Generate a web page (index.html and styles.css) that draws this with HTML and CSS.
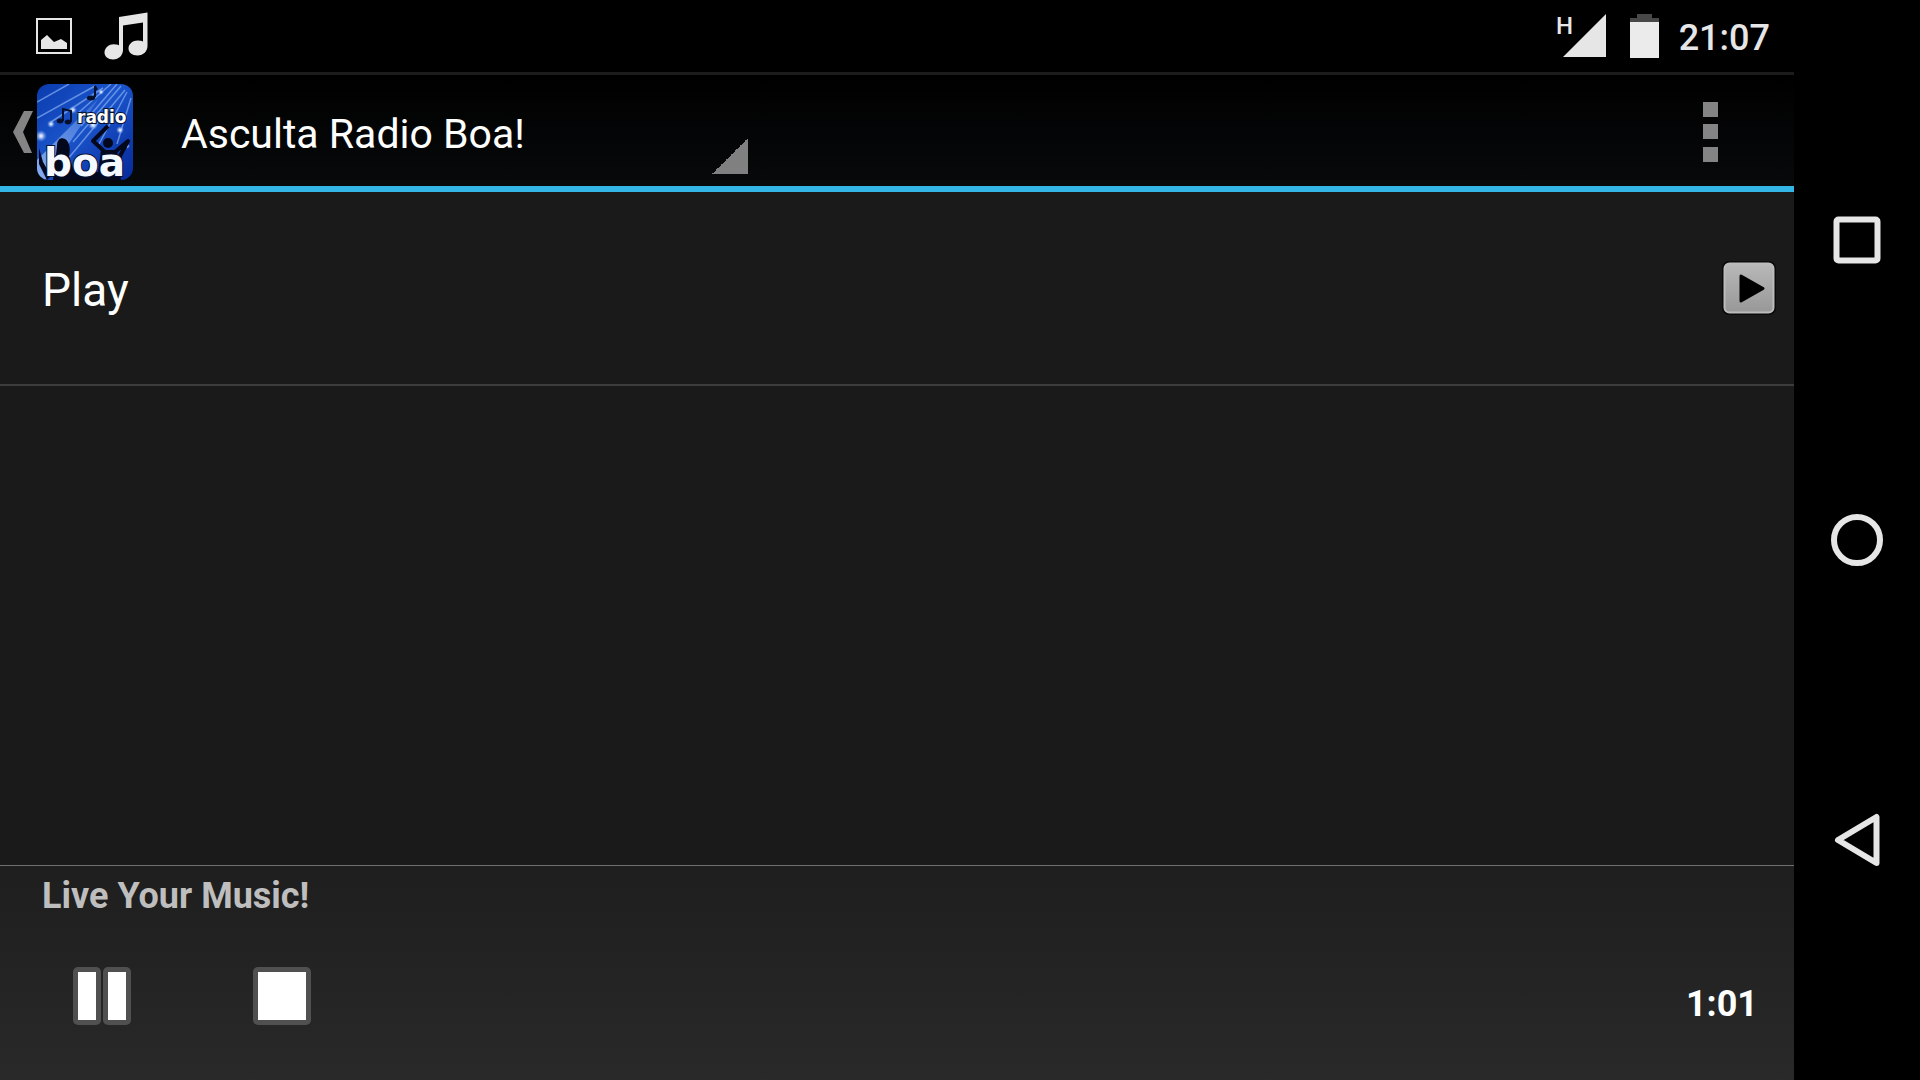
FILE: index.html
```html
<!DOCTYPE html>
<html lang="ro">
<head>
  <meta charset="UTF-8">
  <meta name="viewport" content="width=device-width, initial-scale=1.0">
  <title>Radio Boa</title>
  <link rel="stylesheet" href="styles.css">
</head>
<body>
  <div class="screen">
    <div class="status-bar">
      <div class="notifications">
        <svg width="36" height="36" viewBox="0 0 36 36">
          <rect x="1" y="1" width="34" height="34" fill="none" stroke="#e6e6e6" stroke-width="2"/>
          <path d="M5 31V22L11 17L18 24L25 21L31 25V31Z" fill="#e6e6e6"/>
        </svg>
        <svg width="44" height="48" viewBox="0 0 44 48">
          <path d="M15 5L43.500 0.500V34C43.500 39 39.500 43.500 33.500 43.500C28 43.500 24.500 40.500 24.500 36.500C24.500 31.500 29.500 28 34.500 28.500C36.500 28.600 38 29 39 29.500V10.500L19 13.500V38C19 43 15 47.500 9 47.500C4 47.500 0.500 44.500 0.500 40.500C0.500 35.500 5.500 32 10 32.200C12.500 32.300 14 32.700 15 33.200Z" fill="#e6e6e6"/>
        </svg>
      </div>
      <div class="system">
        <svg width="52" height="44" viewBox="0 0 52 44">
          <text x="2" y="20" class="network">H</text>
          <path d="M9 43L52 0V43Z" fill="#e6e6e6"/>
        </svg>
        <svg width="29" height="44" viewBox="0 0 29 44">
          <path d="M7 0H22V4H29V9H0V4H7Z" fill="#484848"/>
          <rect y="8" width="29" height="36" fill="#ebebeb"/>
        </svg>
        <span class="clock">21:07</span>
      </div>
    </div>

    <header class="action-bar">
      <button class="up-btn" aria-label="Back">
        <svg width="20" height="42" viewBox="0 0 20 42">
          <path d="M11 0H20L10 21L19 42H11L0 21Z" fill="#848484"/>
        </svg>
        <svg class="logo" width="96" height="96" viewBox="0 0 96 96">
          <defs>
            <linearGradient id="sky" x1="0" y1="0" x2="1" y2="1">
              <stop offset="0" stop-color="#0b3cae"/>
              <stop offset="0.450" stop-color="#1c55cc"/>
              <stop offset="1" stop-color="#062a9a"/>
            </linearGradient>
            <linearGradient id="beam" x1="1" y1="0" x2="0" y2="1">
              <stop offset="0" stop-color="#9cc0f8" stop-opacity="0.200"/>
              <stop offset="1" stop-color="#a9ccff" stop-opacity="0.750"/>
            </linearGradient>
            <radialGradient id="glow">
              <stop offset="0" stop-color="#ffffff"/>
              <stop offset="0.300" stop-color="#dbe9ff" stop-opacity="0.800"/>
              <stop offset="1" stop-color="#6fa0f0" stop-opacity="0"/>
            </radialGradient>
            <clipPath id="tile"><rect width="96" height="96" rx="12"/></clipPath>
          </defs>
          <g clip-path="url(#tile)">
            <rect width="96" height="96" fill="url(#sky)"/>
            <path d="M62 14L0 76V96H8Z" fill="url(#beam)"/>
            <g stroke="#86aef0" stroke-width="1.500" opacity="0.700">
              <path d="M0 18L32 0"/>
              <path d="M0 34L58 2"/>
              <path d="M14 38L66 4"/>
              <path d="M40 30L74 0"/>
              <path d="M44 42L80 0"/>
              <path d="M36 58L84 2"/>
              <path d="M30 76L88 6"/>
              <path d="M62 60L90 8"/>
              <path d="M80 60L94 14"/>
            </g>
            <circle cx="4" cy="52" r="6" fill="url(#glow)"/>
            <circle cx="14" cy="40" r="4" fill="url(#glow)"/>
            <circle cx="36" cy="26" r="4" fill="url(#glow)"/>
            <circle cx="56" cy="41" r="5" fill="url(#glow)"/>
            <circle cx="64" cy="8" r="3" fill="url(#glow)"/>
            <circle cx="83" cy="46" r="4" fill="url(#glow)"/>
            <circle cx="90" cy="62" r="3" fill="url(#glow)"/>
            <g fill="#04102e" stroke="#04102e">
              <path d="M58 13V2L60 6" fill="none" stroke-width="2"/>
              <ellipse cx="54" cy="14" rx="4" ry="2"/>
              <path d="M26 37V25L34 27V38" fill="none" stroke-width="2"/>
              <ellipse cx="23" cy="37" rx="3" ry="2"/>
              <ellipse cx="31" cy="38" rx="3" ry="2"/>
            </g>
            <!-- dancers behind the name -->
            <g fill="#03081c">
              <path d="M20 62C20 55 24 53 28 55C32 57 34 64 32 72L40 96H16Z"/>
              <path d="M2 64L6 78L14 92L10 96L2 80Z"/>
              <circle cx="71" cy="59" r="5"/>
              <path d="M34 88H76V96H34Z"/>
            </g>
            <path d="M71 42L56 57L68 68H78L91 57L82 74" fill="none" stroke="#03081c" stroke-width="4" stroke-linejoin="round"/>
            <path d="M64 66H80L84 96H60Z" fill="#03081c"/>
          </g>
          <text x="40" y="39" class="logo-small">radio</text>
          <text x="7" y="92" class="logo-big">boa</text>
        </svg>
      </button>
      <select class="title" aria-label="Section">
        <option>Asculta Radio Boa!</option>
      </select>
      <button class="more-btn" aria-label="More options">
        <svg width="15" height="60" viewBox="0 0 15 60">
          <path d="M0 0H15V15H0ZM0 22H15V37H0ZM0 45H15V60H0Z" fill="#848484"/>
        </svg>
      </button>
    </header>

    <main class="content">
      <button class="row">
        <span class="row-label">Play</span>
        <svg width="57" height="57" viewBox="0 0 57 57">
          <defs>
            <linearGradient id="key" x1="0" y1="0" x2="0" y2="1">
              <stop offset="0" stop-color="#b8b8b8"/>
              <stop offset="1" stop-color="#989898"/>
            </linearGradient>
          </defs>
          <rect x="2" y="1" width="54" height="54" rx="7" fill="#0a0a0a"/>
          <rect x="4.500" y="3.500" width="49" height="49" rx="5" fill="url(#key)" stroke="#bcbcbc" stroke-width="2"/>
          <path d="M21 16V41L43 28.500Z" fill="#000" stroke="#000" stroke-width="3" stroke-linejoin="round"/>
        </svg>
      </button>
    </main>

    <footer class="player">
      <div class="track">Live Your Music!</div>
      <div class="controls">
        <button class="control-btn" aria-label="Pause">
          <svg width="58" height="58" viewBox="0 0 58 58">
            <g fill="#505050">
              <rect width="28" height="58" rx="5"/>
              <rect x="30" width="28" height="58" rx="5"/>
            </g>
            <path d="M5 5H23V53H5ZM35 5H53V53H35Z" fill="#fff"/>
          </svg>
        </button>
        <button class="control-btn" aria-label="Stop">
          <svg width="58" height="58" viewBox="0 0 58 58">
            <rect width="58" height="58" rx="5" fill="#505050"/>
            <rect x="5" y="5" width="48" height="48" fill="#fff"/>
          </svg>
        </button>
        <span class="time">1:01</span>
      </div>
    </footer>
  </div>

  <nav class="nav-bar">
    <button class="nav-btn" aria-label="Recent apps">
      <svg width="54" height="54" viewBox="0 0 54 54">
        <rect x="6.500" y="6.500" width="41" height="41" rx="2" fill="none" stroke="#e6e6e6" stroke-width="6"/>
      </svg>
    </button>
    <button class="nav-btn" aria-label="Home">
      <svg width="54" height="54" viewBox="0 0 54 54">
        <circle cx="27" cy="27" r="23" fill="none" stroke="#e6e6e6" stroke-width="6"/>
      </svg>
    </button>
    <button class="nav-btn" aria-label="Back">
      <svg width="54" height="54" viewBox="0 0 54 54">
        <path d="M46.500 4V50L8 27Z" fill="none" stroke="#e6e6e6" stroke-width="6" stroke-linejoin="round"/>
      </svg>
    </button>
  </nav>
</body>
</html>
```
FILE: styles.css
```css
* {
  box-sizing: border-box;
}
body {
  margin: 0;
  height: 100vh;
  display: flex;
  background: #000;
  color: #fff;
  font-family: Roboto, sans-serif;
}
button {
  border: none;
  background: none;
  padding: 0;
  color: inherit;
  font-family: inherit;
  cursor: pointer;
}
svg {
  display: block;
  flex-shrink: 0;
  overflow: visible;
}
.screen {
  flex: 1;
  display: flex;
  flex-direction: column;
  background: #1a1a1a;
}

/* status bar */
.status-bar {
  height: 72px;
  padding: 0 24px 0 36px;
  display: flex;
  justify-content: space-between;
  align-items: center;
  background: #000;
}
.notifications {
  display: flex;
  align-items: center;
  gap: 32px;
}
.system {
  display: flex;
  align-items: center;
  gap: 24px;
}
.network {
  font-size: 24px;
  font-weight: 500;
  fill: #e6e6e6;
}
.clock {
  margin-left: -4px;
  padding-top: 4px;
  font-size: 36px;
  font-weight: 500;
  line-height: 40px;
  color: #e6e6e6;
}

/* action bar */
.action-bar {
  height: 120px;
  padding-top: 2px;
  display: flex;
  align-items: center;
  background: linear-gradient(#000, #07090a);
  border-top: 3px solid #1c1c1c;
  border-bottom: 6px solid #33b5e5;
}
.up-btn {
  padding-left: 13px;
  display: flex;
  align-items: center;
  gap: 4px;
}
.title {
  width: 588px;
  height: 96px;
  margin-left: 27px;
  padding: 4px 48px 0 21px;
  appearance: none;
  border: none;
  color: #fff;
  font-family: inherit;
  font-size: 41px;
  background: linear-gradient(135deg, transparent 50%, #808080 50%) no-repeat right bottom 6px / 36px 36px;
}
.logo-small {
  font-family: "DejaVu Sans", sans-serif;
  font-size: 17px;
  font-weight: 700;
  fill: #fff;
  stroke: #04102e;
  stroke-width: 2px;
  paint-order: stroke;
}
.logo-big {
  font-family: "DejaVu Sans", sans-serif;
  font-size: 39px;
  font-weight: 700;
  fill: #f4f8ff;
  stroke: #04102e;
  stroke-width: 2px;
  paint-order: stroke;
}
.more-btn {
  width: 168px;
  height: 100%;
  margin-left: auto;
  display: flex;
  justify-content: center;
  align-items: center;
}

/* list */
.content {
  flex: 1;
}
.row {
  width: 100%;
  height: 194px;
  padding: 0 17px 0 42px;
  display: flex;
  justify-content: space-between;
  align-items: center;
  font-size: 46px;
  border-bottom: 2px solid #3c3c3c;
}
.row-label {
  padding-top: 4px;
}

/* player */
.player {
  padding-bottom: 14px;
  border-top: 1px solid #707070;
  background: linear-gradient(#1e1e1e, #292929);
}
.track {
  padding-left: 42px;
  font-size: 36px;
  font-weight: 700;
  line-height: 60px;
  color: #bebebe;
}
.controls {
  height: 140px;
  padding: 0 36px 0 12px;
  display: flex;
  align-items: center;
}
.control-btn {
  width: 180px;
  height: 100%;
  display: flex;
  justify-content: center;
  align-items: center;
}
.time {
  margin-left: auto;
  padding-top: 16px;
  font-size: 36px;
  font-weight: 700;
}

/* navigation */
.nav-bar {
  width: 126px;
  padding: 90px 0;
  display: flex;
  flex-direction: column;
  background: #000;
}
.nav-btn {
  flex: 1;
  display: flex;
  justify-content: center;
  align-items: center;
}
```
